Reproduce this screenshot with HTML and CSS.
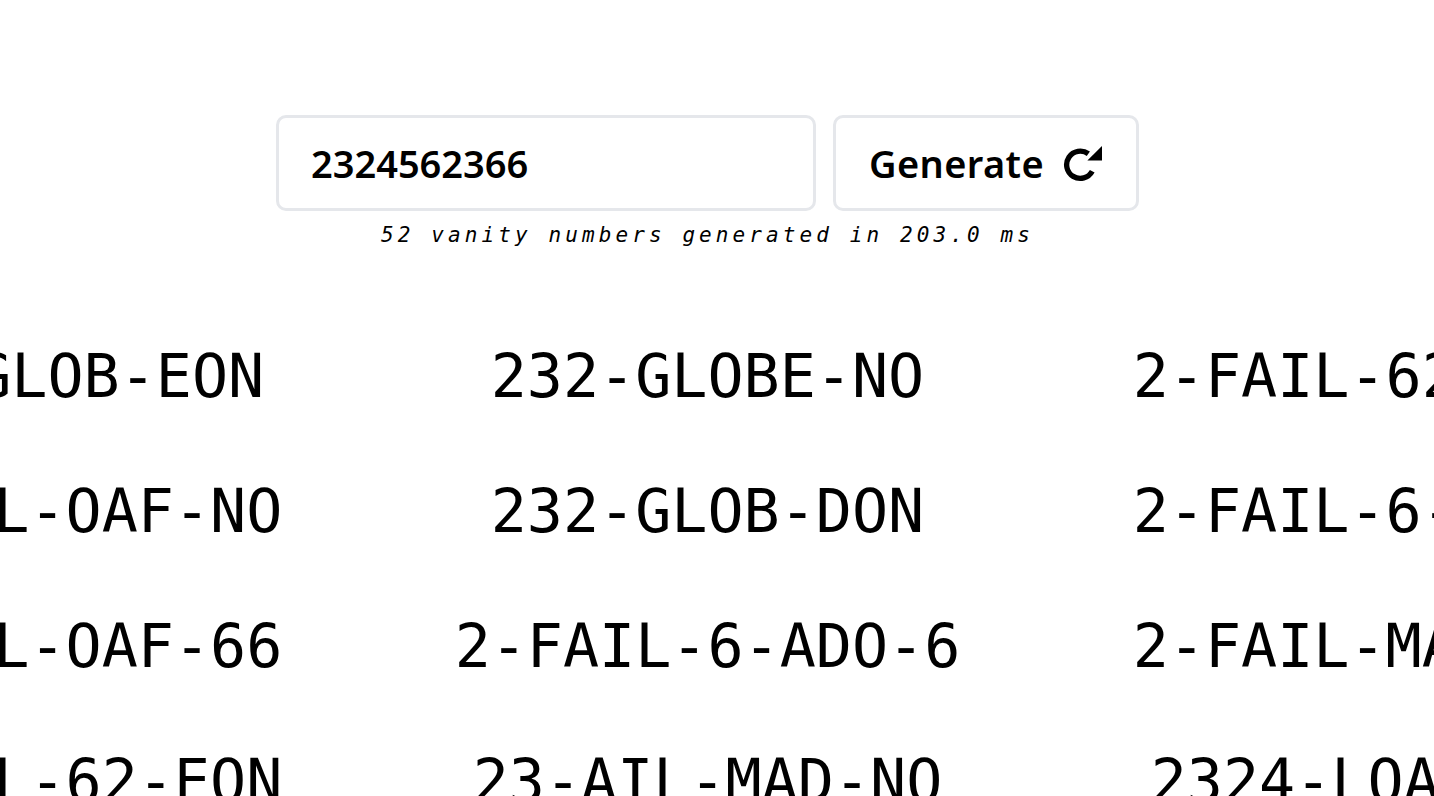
FILE: index.html
```html
<!DOCTYPE html>
<html lang="en">
<head>
<meta charset="utf-8">
<title>Vanity Number Generator</title>
<link rel="stylesheet" href="styles.css">
</head>
<body>
<main class="page">
  <h1 class="title">Vanity Number Generator</h1>
  <form class="controls" onsubmit="return false">
    <input class="phone-input" type="text" value="2324562366" aria-label="Phone number">
    <button class="generate-btn" type="submit">
      <span>Generate</span>
      <svg class="icon" viewBox="0 0 40 38" width="40" height="38" aria-hidden="true">
        <path d="M26 9 A14 14 0 1 0 30 27" fill="none" stroke="#000" stroke-width="5.5"/>
        <polygon points="40,1 40,16 25,16" fill="#000"/>
      </svg>
    </button>
  </form>
  <p class="stats">52 vanity numbers generated in 203.0 ms</p>
  <ul class="results">
    <li class="result">232-GLOB-EON</li>
    <li class="result">232-GLOBE-NO</li>
    <li class="result">2-FAIL-62-DON</li>
    <li class="result">2-FAIL-OAF-NO</li>
    <li class="result">232-GLOB-DON</li>
    <li class="result">2-FAIL-6-AEON</li>
    <li class="result">2-FAIL-OAF-66</li>
    <li class="result">2-FAIL-6-ADO-6</li>
    <li class="result">2-FAIL-MAD-NO</li>
    <li class="result">2-FAIL-62-EON</li>
    <li class="result">23-AIL-MAD-NO</li>
    <li class="result">2324-LOAF-NO</li>
    <li class="result">2-FAIL-MAD-66</li>
    <li class="result">23-AIL-OAF-NO</li>
    <li class="result">2324-LOAF-66</li>
  </ul>
</main>
</body>
</html>
```
FILE: styles.css
```css
html, body {
  margin: 0;
  padding: 0;
  background: #ffffff;
}

.page {
  box-sizing: border-box;
  height: 100vh;
  overflow: hidden;
  padding-right: 19px;
  display: flex;
  flex-direction: column;
  align-items: center;
  color: #000;
}

.title {
  margin: -60px 0 115px;
  padding-right: 70px;
  font-family: "Noto Sans", sans-serif;
  font-weight: 600;
  font-size: 48px;
  line-height: 60px;
  color: #999;
  white-space: nowrap;
}

.controls {
  display: flex;
  gap: 17px;
  margin: 0;
}

.phone-input {
  box-sizing: border-box;
  width: 540px;
  height: 96px;
  border: 3px solid #e5e7eb;
  border-radius: 10px;
  padding: 0 32px;
  font-family: "Noto Sans", sans-serif;
  font-weight: 600;
  font-size: 38px;
  color: #000;
  background: #fff;
  outline: none;
}

.generate-btn {
  box-sizing: border-box;
  height: 96px;
  display: flex;
  align-items: center;
  gap: 19px;
  padding: 0 34px 0 33px;
  border: 3px solid #e5e7eb;
  border-radius: 10px;
  background: #fff;
  font-family: "Noto Sans", sans-serif;
  font-weight: 600;
  font-size: 38px;
  letter-spacing: 0.4px;
  color: #000;
  cursor: pointer;
}

.icon {
  display: block;
  width: 39px;
  height: 37px;
}

.stats {
  margin: 12px 0 0;
  font-family: "DejaVu Sans Mono", monospace;
  font-style: italic;
  font-size: 21px;
  line-height: 24px;
  letter-spacing: 4.1px;
  white-space: nowrap;
}

.results {
  list-style: none;
  margin: 62px 0 0;
  padding: 0;
  display: grid;
  grid-template-columns: repeat(3, 660px);
  grid-auto-rows: 135px;
  flex-shrink: 0;
}

.result {
  text-align: center;
  font-family: "DejaVu Sans Mono", monospace;
  font-size: 60px;
  line-height: 135px;
  white-space: nowrap;
}
```
